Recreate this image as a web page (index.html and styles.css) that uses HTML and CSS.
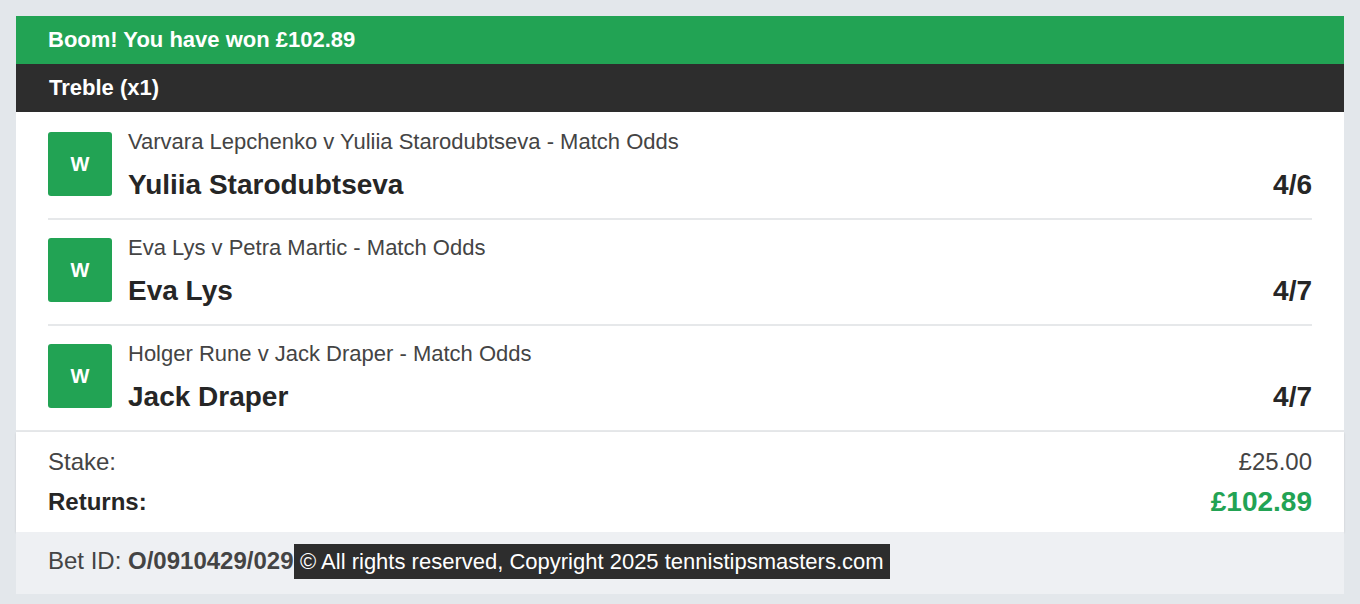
FILE: index.html
```html
<!DOCTYPE html>
<html lang="en">
<head>
  <meta charset="UTF-8" />
  <title>Bet receipt</title>
  <link rel="stylesheet" href="styles.css">
</head>
<body>
<div class="receipt">
  <div class="won-bar">Boom! You have won £102.89</div>
  <div class="bet-type">Treble (x1)</div>

  <div class="selections">
    <div class="selection">
      <div class="result">W</div>
      <div class="sel-info">
        <div class="market">Varvara Lepchenko v Yuliia Starodubtseva - Match Odds</div>
        <div class="pick-row">
          <span class="pick">Yuliia Starodubtseva</span>
          <span class="odds">4/6</span>
        </div>
      </div>
    </div>
    <div class="selection">
      <div class="result">W</div>
      <div class="sel-info">
        <div class="market">Eva Lys v Petra Martic - Match Odds</div>
        <div class="pick-row">
          <span class="pick">Eva Lys</span>
          <span class="odds">4/7</span>
        </div>
      </div>
    </div>
    <div class="selection">
      <div class="result">W</div>
      <div class="sel-info">
        <div class="market">Holger Rune v Jack Draper - Match Odds</div>
        <div class="pick-row">
          <span class="pick">Jack Draper</span>
          <span class="odds">4/7</span>
        </div>
      </div>
    </div>
  </div>

  <div class="totals">
    <div class="total-row">
      <span>Stake:</span>
      <span>£25.00</span>
    </div>
    <div class="total-row returns">
      <span>Returns:</span>
      <span class="amount">£102.89</span>
    </div>
  </div>

  <div class="bet-footer">
    Bet ID: <b>O/0910429/029</b>
    <div class="copyright">© All rights reserved, Copyright 2025 tennistipsmasters.com</div>
  </div>
</div>
</body>
</html>
```

FILE: styles.css
```css
body {
  margin: 0;
  padding: 16px 16px 10px;
  background-color: #e3e7eb;
  font-family: "Liberation Sans", Arial, sans-serif;
}
.receipt {
  background-color: #fff;
}
.won-bar {
  background-color: #22a354;
  color: #fff;
  font-weight: bold;
  font-size: 22px;
  height: 48px;
  line-height: 48px;
  padding: 0 32px;
}
.bet-type {
  background-color: #2d2d2d;
  color: #fff;
  font-weight: bold;
  font-size: 22px;
  height: 48px;
  line-height: 48px;
  padding: 0 33px;
}
.selections {
  padding: 2px 32px 0;
}
.selection {
  display: flex;
  gap: 16px;
  height: 106px;
  padding-top: 18px;
  box-sizing: border-box;
  border-bottom: 2px solid #e6e8ea;
}
.selection:last-child {
  margin: 0 -32px;
  padding-left: 32px;
  padding-right: 32px;
}
.result {
  width: 64px;
  height: 64px;
  flex: none;
  background-color: #22a354;
  border-radius: 3px;
  color: #fff;
  font-weight: bold;
  font-size: 20px;
  display: flex;
  align-items: center;
  justify-content: center;
}
.sel-info {
  flex: 1;
}
.market {
  color: #444;
  font-size: 22px;
  line-height: 24px;
  margin-top: -2px;
}
.pick-row {
  display: flex;
  justify-content: space-between;
  margin-top: 15px;
  color: #262626;
  font-weight: bold;
  font-size: 28px;
  line-height: 32px;
}
.totals {
  height: 100px;
  box-sizing: border-box;
  padding: 16px 32px 0;
  box-shadow: 0 1px 2px rgba(0, 0, 0, 0.12);
  position: relative;
}
.total-row {
  display: flex;
  justify-content: space-between;
  font-size: 24px;
  color: #444;
  line-height: 28px;
}
.returns {
  margin-top: 12px;
  font-weight: bold;
  color: #262626;
}
.returns .amount {
  color: #22a354;
  font-size: 28px;
}
.bet-footer {
  background-color: #eef0f3;
  height: 62px;
  padding: 0 32px;
  font-size: 24px;
  line-height: 58px;
  color: #444;
  position: relative;
}
.copyright {
  position: absolute;
  left: 278px;
  top: 12px;
  background-color: #2d2d2d;
  color: #fff;
  font-size: 22px;
  line-height: 35px;
  padding: 0 6px;
}
```
